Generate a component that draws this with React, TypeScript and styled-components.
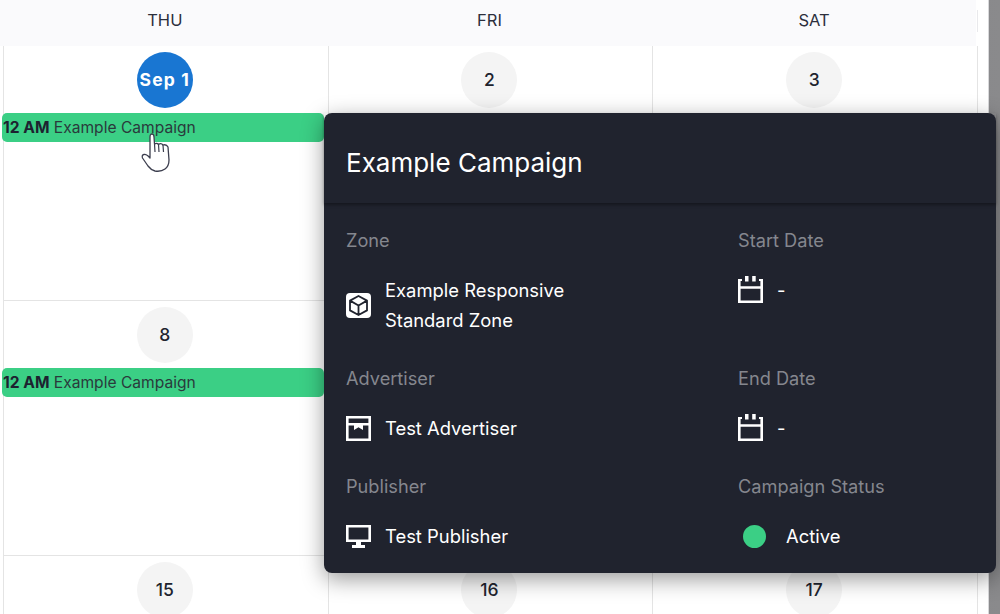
import React from "react";
import styled, { createGlobalStyle } from "styled-components";

const days = ["THU", "FRI", "SAT"];
const weeks = [
  { id: "w1", dates: ["Sep 1", "2", "3"], event: true },
  { id: "w2", dates: ["8", "", ""], event: true },
  { id: "w3", dates: ["15", "16", "17"], event: false },
];

const BoxIcon = () => (
  <svg width="25" height="25" viewBox="0 0 25 25">
    <rect x="0" y="0" width="25" height="25" rx="4" fill="#fff" />
    <path
      d="M12.5 3 L21 7.6 V17.4 L12.5 22 L4 17.4 V7.6 Z M4 7.6 L12.5 12.5 L21 7.6 M12.5 12.5 V22"
      fill="none"
      stroke="#20232e"
      strokeWidth="1.8"
      strokeLinejoin="round"
    />
  </svg>
);

const StoreIcon = () => (
  <svg width="25" height="25" viewBox="0 0 25 25">
    <path
      d="M1.3 1.3 H23.7 V23.7 H1.3 Z M1.3 8.2 H23.7"
      fill="none"
      stroke="#fff"
      strokeWidth="2.6"
    />
    <path d="M8 9 H17 V14 L14.5 12.6 L12.5 11.2 L10.5 12.6 L8 14 Z" fill="#fff" />
  </svg>
);

const MonitorIcon = () => (
  <svg width="25" height="23" viewBox="0 0 25 23">
    <path d="M1.3 1.3 H23.7 V15.7 H1.3 Z" fill="none" stroke="#fff" strokeWidth="2.6" />
    <path d="M10 17 H15 V20 H19 V23 H6 V20 H10 Z" fill="#fff" />
  </svg>
);

const DateIcon = () => (
  <svg width="25" height="27" viewBox="0 0 25 27">
    <path
      d="M1.3 3 V25.7 H23.7 V3 M1.3 11.5 H23.7"
      fill="none"
      stroke="#fff"
      strokeWidth="2.6"
    />
    <path d="M0 3 H4 V5 H0 Z M21 3 H25 V5 H21 Z" fill="#fff" />
    <path d="M7 0 H10.5 V5.5 H7 Z M14.2 0 H17.7 V5.5 H14.2 Z" fill="#fff" />
  </svg>
);

const HandCursor = () => (
  <svg width="30" height="40" viewBox="0 0 30 40">
    <path
      d="M9 20 L9 4 Q9 1 11 1 Q13 1 13 4 L13.5 11 Q16 9.5 17.5 11.5 Q20 9.5 22 12 Q25.5 11 27 14 L28 27 Q28 33 24 36 Q20 39 14 38 Q10 37 7 33 L1.5 25 Q.5 22 3 21.5 Q5.5 21 9 25 Z"
      fill="#fff"
      stroke="#3c3e4e"
      strokeWidth="1.3"
      strokeLinejoin="round"
    />
    <path d="M13.5 11 L14 19 M17.5 11.5 L18 19 M22 12 L22.5 19" fill="none" stroke="#3c3e4e" strokeWidth="1.2" />
  </svg>
);

const App = () => {
  return (
    <>
      <GlobalStyle />
      <Backdrop>
        <Calendar>
          <DayHeader>
            {days.map((day) => (
              <DayName key={day}>{day}</DayName>
            ))}
          </DayHeader>
          {weeks.map((week) => (
            <Week key={week.id}>
              {week.dates.map((date, i) => (
                <Cell key={i}>
                  {date && <DateBadge $today={date === "Sep 1"}>{date}</DateBadge>}
                  {week.event && i === 0 && (
                    <EventBar>
                      <b>12 AM</b> Example Campaign
                    </EventBar>
                  )}
                </Cell>
              ))}
            </Week>
          ))}
          <Popover>
            <PopoverTitle>Example Campaign</PopoverTitle>
            <PopoverBody>
              <Field>
                <FieldLabel>Zone</FieldLabel>
                <FieldValue>
                  <BoxIcon />
                  <span>
                    Example Responsive
                    <br />
                    Standard Zone
                  </span>
                </FieldValue>
              </Field>
              <Field>
                <FieldLabel>Start Date</FieldLabel>
                <DateValue>
                  <DateIcon />
                  <span>-</span>
                </DateValue>
              </Field>
              <Field>
                <FieldLabel>Advertiser</FieldLabel>
                <FieldValue>
                  <StoreIcon />
                  <span>Test Advertiser</span>
                </FieldValue>
              </Field>
              <Field>
                <FieldLabel>End Date</FieldLabel>
                <DateValue>
                  <DateIcon />
                  <span>-</span>
                </DateValue>
              </Field>
              <Field>
                <FieldLabel>Publisher</FieldLabel>
                <FieldValue>
                  <MonitorIcon />
                  <span>Test Publisher</span>
                </FieldValue>
              </Field>
              <Field>
                <FieldLabel>Campaign Status</FieldLabel>
                <StatusValue>
                  <StatusDot />
                  <span>Active</span>
                </StatusValue>
              </Field>
            </PopoverBody>
          </Popover>
          <Cursor>
            <HandCursor />
          </Cursor>
        </Calendar>
      </Backdrop>
    </>
  );
};

export default App;

const GlobalStyle = createGlobalStyle`
  html, body {
    margin: 0;
    height: 100%;
    overflow: hidden;
  }
  body {
    font-family: "Inter", "Liberation Sans", sans-serif;
    color: #20232e;
  }
`;

const Backdrop = styled.div`
  width: 1000px;
  height: 614px;
  overflow: hidden;
  background: linear-gradient(90deg, #69696d 0, #8a8a8c 100%);
`;

const Calendar = styled.div`
  position: relative;
  box-sizing: border-box;
  width: 989px;
  height: 614px;
  background: #fff;
  border-right: 1px solid #d8d8da;
`;

const DayHeader = styled.div`
  position: relative;
  display: grid;
  grid-template-columns: repeat(3, 324.67px);
  box-sizing: border-box;
  width: 976px;
  height: 46px;
  padding-left: 3.5px;
  background: #fafafc;

  &::after {
    content: "";
    position: absolute;
    top: 10px;
    right: -2px;
    width: 1px;
    height: 22px;
    background: #e9e9ec;
  }
`;

const DayName = styled.div`
  padding: 10px 2px 0 0;
  text-align: center;
  font-size: 16.5px;
  line-height: 20px;
  color: #2c2f3c;
`;

const Week = styled.div`
  display: grid;
  grid-template-columns: repeat(3, 324.67px);
  box-sizing: border-box;
  width: 975px;
  height: 255px;
  margin-left: 3px;
  border-left: 1px solid #e4e4e4;
  border-bottom: 1px solid #e4e4e4;
`;

const Cell = styled.div`
  display: flex;
  flex-direction: column;
  align-items: center;
  min-width: 0;
  padding: 6px 2px 0 0;
  border-right: 1px solid #e4e4e4;
`;

const DateBadge = styled.div<{ $today?: boolean }>`
  display: flex;
  flex: none;
  align-items: center;
  justify-content: center;
  box-sizing: border-box;
  width: 56px;
  height: 56px;
  padding-bottom: 2px;
  border-radius: 50%;
  background: ${(props) => (props.$today ? "#1976d2" : "#f4f4f4")};
  color: ${(props) => (props.$today ? "#fff" : "#20232e")};
  font-size: 17.5px;
  font-weight: ${(props) => (props.$today ? 700 : 500)};
  letter-spacing: ${(props) => (props.$today ? "1.2px" : "0")};
  white-space: nowrap;
`;

const EventBar = styled.div`
  align-self: flex-start;
  box-sizing: border-box;
  width: 322px;
  height: 29px;
  margin: 5px 0 0 -2px;
  padding-left: 1px;
  border-radius: 5px;
  background: #3bcf85;
  color: #2a3a3c;
  font-size: 15.6px;
  line-height: 29px;
  white-space: nowrap;

  b {
    color: #1d2230;
    font-weight: 700;
  }
`;

const Popover = styled.div`
  position: absolute;
  top: 113px;
  left: 324px;
  width: 672px;
  height: 460px;
  border-radius: 8px;
  background: #20232e;
  color: #fff;
  box-shadow: 0 6px 22px rgba(0, 0, 0, 0.4);
`;

const PopoverTitle = styled.div`
  display: flex;
  align-items: center;
  box-sizing: border-box;
  height: 90px;
  padding: 8px 0 0 22px;
  font-size: 26px;
  box-shadow: 0 2px 3px rgba(0, 0, 0, 0.35);
`;

const PopoverBody = styled.div`
  display: grid;
  grid-template-columns: 392px 1fr;
  row-gap: 31px;
  padding: 25px 0 0 22px;
`;

const Field = styled.div`
  display: flex;
  flex-direction: column;
  gap: 23px;
`;

const FieldLabel = styled.div`
  font-size: 18.2px;
  line-height: 24px;
  color: #85878e;
`;

const FieldValue = styled.div`
  display: flex;
  align-items: center;
  gap: 14px;
  font-size: 18.4px;
  line-height: 30px;
`;

const DateValue = styled(FieldValue)`
  align-items: flex-start;

  svg {
    margin-top: 1px;
  }
`;

const StatusValue = styled(FieldValue)`
  gap: 20px;
  padding-left: 5px;
`;

const StatusDot = styled.span`
  width: 23px;
  height: 23px;
  border-radius: 50%;
  background: #3bcf85;
`;

const Cursor = styled.div`
  position: absolute;
  top: 133px;
  left: 141px;
  height: 40px;
`;
